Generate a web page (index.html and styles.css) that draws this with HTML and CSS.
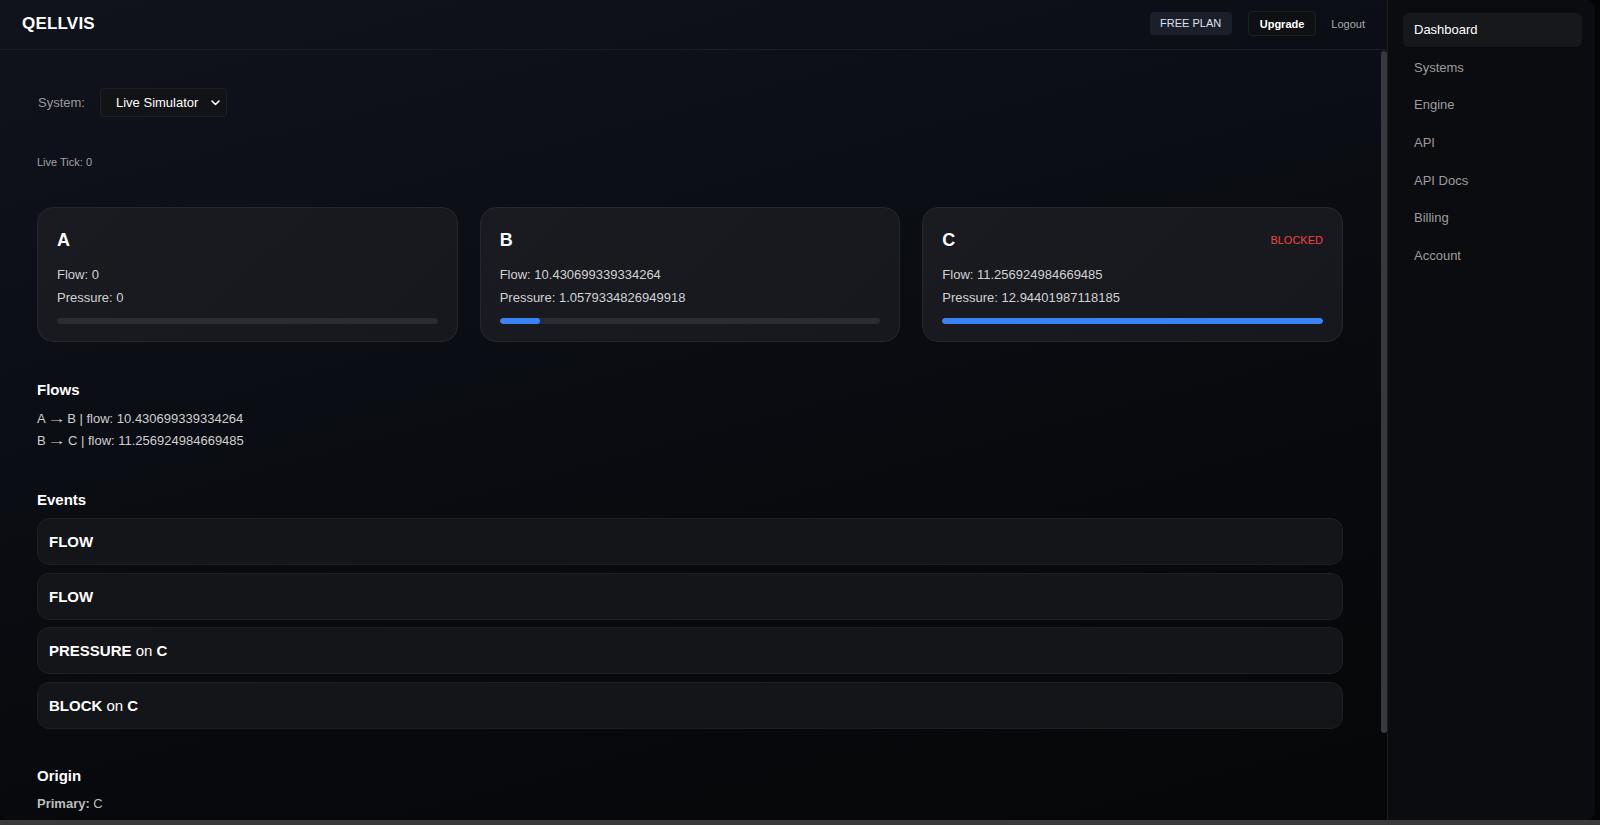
FILE: index.html
```html
<!DOCTYPE html>
<html lang="en">
<head>
    <meta charset="UTF-8">
    <meta name="viewport" content="width=device-width, initial-scale=1.0">
    <title>Qellvis - Dashboard</title>
    <link rel="stylesheet" href="styles.css">
</head>
<body>
    <div class="app">
        <div class="main">
            <header class="topbar">
                <div class="logo">QELLVIS</div>
                <div class="topbar-actions">
                    <span class="plan-badge">FREE PLAN</span>
                    <button class="upgrade-btn">Upgrade</button>
                    <a class="logout" href="#">Logout</a>
                </div>
            </header>

            <div class="content">
                <div class="system-row">
                    <label for="system">System:</label>
                    <div class="select-wrap">
                        <select id="system" class="system-select">
                            <option>Live Simulator</option>
                        </select>
                        <svg class="chevron" width="9" height="6" viewBox="0 0 9 6"><path d="M1 1l3.5 3.5L8 1" fill="none" stroke="#fff" stroke-width="1.6" stroke-linecap="round" stroke-linejoin="round"/></svg>
                    </div>
                </div>

                <div class="live-tick">Live Tick: 0</div>

                <div class="nodes">
                    <div class="node">
                        <div class="node-head">
                            <h3>A</h3>
                        </div>
                        <p>Flow: 0</p>
                        <p>Pressure: 0</p>
                        <div class="bar"><div class="bar-fill" style="width: 0%"></div></div>
                    </div>
                    <div class="node">
                        <div class="node-head">
                            <h3>B</h3>
                        </div>
                        <p>Flow: 10.430699339334264</p>
                        <p>Pressure: 1.0579334826949918</p>
                        <div class="bar"><div class="bar-fill" style="width: 10.58%"></div></div>
                    </div>
                    <div class="node">
                        <div class="node-head">
                            <h3>C</h3>
                            <span class="status blocked">BLOCKED</span>
                        </div>
                        <p>Flow: 11.256924984669485</p>
                        <p>Pressure: 12.94401987118185</p>
                        <div class="bar"><div class="bar-fill" style="width: 100%"></div></div>
                    </div>
                </div>

                <h4 class="section-title flows-title">Flows</h4>
                <div class="flow-line">A <span class="arrow">→</span> B | flow: 10.430699339334264</div>
                <div class="flow-line">B <span class="arrow">→</span> C | flow: 11.256924984669485</div>

                <h4 class="section-title events-title">Events</h4>
                <div class="events">
                    <div class="event"><b>FLOW</b></div>
                    <div class="event"><b>FLOW</b></div>
                    <div class="event"><b>PRESSURE</b> on <b>C</b></div>
                    <div class="event"><b>BLOCK</b> on <b>C</b></div>
                </div>

                <h4 class="section-title origin-title">Origin</h4>
                <div class="origin-line"><b>Primary:</b> C</div>
            </div>
            <div class="scroll-thumb"></div>
        </div>

        <nav class="sidebar">
            <a class="nav-item active" href="#">Dashboard</a>
            <a class="nav-item" href="#">Systems</a>
            <a class="nav-item" href="#">Engine</a>
            <a class="nav-item" href="#">API</a>
            <a class="nav-item" href="#">API Docs</a>
            <a class="nav-item" href="#">Billing</a>
            <a class="nav-item" href="#">Account</a>
        </nav>
    </div>
</body>
</html>
```

FILE: styles.css
```css
* {
    box-sizing: border-box;
}
html, body {
    margin: 0;
    height: 825px;
    overflow: hidden;
}
body {
    font-family: "Liberation Sans", Arial, sans-serif;
    color: #fff;
    background: linear-gradient(to bottom, #050506 820px, #3a3a3d 820px);
}
.app {
    display: flex;
    width: 1595px;
    height: 820px;
    border-radius: 0 8px 8px 8px;
    overflow: hidden;
    background: #0b0c0f;
}

/* left column: top bar + scrolling content */
.main {
    position: relative;
    width: 1388px;
    display: flex;
    flex-direction: column;
    border-right: 1px solid #1b1d22;
    background: linear-gradient(165deg, #10131c 0%, #0b0e15 35%, #08090c 70%, #060709 100%);
}
.topbar {
    height: 50px;
    flex-shrink: 0;
    display: flex;
    align-items: center;
    justify-content: space-between;
    padding: 0 22px;
    border-bottom: 1px solid #1a1d24;
}
.logo {
    font-size: 17px;
    font-weight: bold;
    letter-spacing: 0.2px;
    margin-top: -2px;
}
.topbar-actions {
    display: flex;
    align-items: center;
    margin-top: -2px;
}
.plan-badge {
    font-size: 11px;
    color: #dde2ea;
    background: #1b1f2c;
    border-radius: 4px;
    height: 23px;
    line-height: 23px;
    padding: 0 10.5px;
}
.upgrade-btn {
    margin-left: 16px;
    font-family: inherit;
    font-size: 11px;
    font-weight: bold;
    color: #fff;
    background: #0f1013;
    border: 1px solid #1d1f23;
    border-radius: 4px;
    height: 25px;
    padding: 0 11px;
}
.logout {
    margin-left: 15px;
    font-size: 11px;
    color: #a8a8a8;
    text-decoration: none;
}

.content {
    flex: 1;
    overflow: hidden;
    padding: 38px 44px 0 37px;
}
/* page is scrolled to the top; thumb drawn over the right edge */
.scroll-thumb {
    position: absolute;
    top: 51px;
    right: 0;
    width: 6px;
    height: 682px;
    background: #38393e;
    border-radius: 3px;
}

.system-row {
    display: flex;
    align-items: center;
    height: 29px;
}
.system-row label {
    font-size: 13px;
    color: #9a9a9a;
    margin-left: 1px;
    width: 62px;
}
.select-wrap {
    position: relative;
}
.system-select {
    appearance: none;
    -webkit-appearance: none;
    width: 127px;
    height: 29px;
    padding: 0 0 0 15px;
    font-family: inherit;
    font-size: 13px;
    color: #fff;
    background: #121316;
    border: 1px solid #1f2024;
    border-radius: 4px;
}
.chevron {
    position: absolute;
    right: 7px;
    top: 12px;
    pointer-events: none;
}
.live-tick {
    margin-top: 38px;
    font-size: 11px;
    line-height: 14px;
    color: #a3a3a3;
}

/* node cards */
.nodes {
    display: grid;
    grid-template-columns: repeat(3, 1fr);
    gap: 22px;
    margin-top: 38px;
}
.node {
    height: 135px;
    padding: 21px 19px 18px 19px;
    background: linear-gradient(135deg, #191b21 0%, #16181d 100%);
    border: 1px solid #25272d;
    border-radius: 16px;
}
.node-head {
    display: flex;
    justify-content: space-between;
    align-items: center;
    height: 22px;
    margin-bottom: 13px;
}
.node-head h3 {
    margin: 0;
    font-size: 18px;
}
.status {
    font-size: 11px;
}
.status.blocked {
    color: #ef4444;
}
.node p {
    margin: 0;
    font-size: 13px;
    line-height: 22.5px;
    color: #d2d2d2;
}
.bar {
    margin-top: 9px;
    height: 6px;
    background: #2a2c32;
    border-radius: 3px;
    overflow: hidden;
}
.bar-fill {
    height: 100%;
    background: #3b82f6;
    border-radius: 3px;
}

.section-title {
    margin: 0;
    font-size: 15px;
    line-height: 18px;
}
.flows-title {
    margin-top: 39px;
    margin-bottom: 9px;
}
.flow-line {
    font-size: 13px;
    line-height: 22px;
    color: #cfcfcf;
}
.arrow {
    display: inline-block;
    transform: scaleX(1.45);
    margin: 0 1px;
}
.events-title {
    margin-top: 39px;
    margin-bottom: 9px;
}
.events {
    display: flex;
    flex-direction: column;
    gap: 7.7px;
}
.event {
    height: 47px;
    line-height: 45px;
    padding: 0 11px;
    font-size: 15px;
    color: #fff;
    background: #141518;
    border: 1px solid #1e1f23;
    border-radius: 12px;
}
.origin-title {
    margin-top: 38px;
    margin-bottom: 8px;
}
.origin-line {
    font-size: 13px;
    line-height: 22px;
    color: #bdbdbd;
}

/* right nav */
.sidebar {
    flex: 1;
    display: flex;
    flex-direction: column;
    gap: 3.7px;
    padding: 13px 13px 0 15px;
    background: #0b0c0f;
}
.nav-item {
    display: block;
    height: 34px;
    line-height: 34px;
    padding: 0 11px;
    font-size: 13px;
    color: #9c9c9c;
    text-decoration: none;
    border-radius: 6px;
}
.nav-item.active {
    color: #fff;
    background: #17181b;
}
```
